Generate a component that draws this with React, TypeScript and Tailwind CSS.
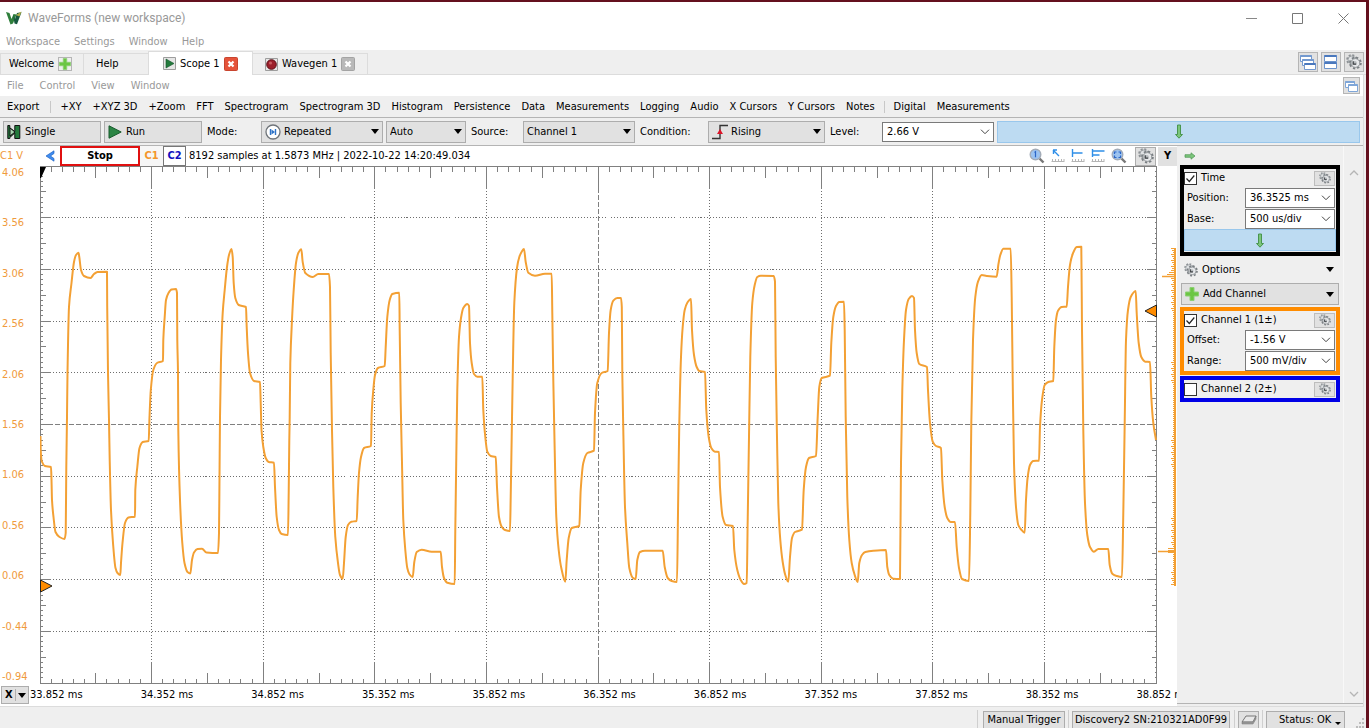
import type { ReactNode } from "react";

const TRACE =
  "40.5,436 40.7,450 41.7,461 45,466 51,467 51.5,480 52,500 53.5,517 55.5,532 59.5,537 64.5,539 65.7,533 66.3,467 67,417 67.5,373 69,307 71.5,283 74,262 76,255 78.5,252.7 79.3,257 81,270 84,276 90.5,278 94,274 97.5,272 107,271.7 107.2,306 108,373 109,420 109.7,460 111,510 113,543 115.5,568 117.5,573 120.3,575 121,563 122.5,543 125,523 128.5,517.5 135,516.7 135.3,490 137.3,467 139.5,448 142.7,442 148.7,441 149.5,417 150.8,390 153.3,370 157,363 163,361 163.3,340 164.7,317 166,300 168.5,293 171.5,289.5 176,289 177,293 177.3,340 178,373 178.3,430 180,500 182.3,543 184.5,563 187.5,572 190.3,573.5 192,560 194,552.5 197.5,549 202,548.7 206.5,552.5 218,553 219,533 219.5,477 220,417 221,360 222.7,313 224.7,290 227,267 229,255 231.5,249 232.7,257 233.7,283 235.3,298 238.7,305 246,307 246.7,327 248,353 250,373 254,381 260,382 260.7,403 261.5,430 263.3,447 265.7,458 268.7,462 274,462.7 275,487 276.7,517 279,530 281.7,534 288,535 288.7,493 289.3,440 289.7,417 290.3,363 292,320 293.7,290 296,263 298.3,253 301.3,249.3 302.7,262 305.3,273 312.7,277 318.3,274 329,274 330,287 330.7,353 332,430 333.3,487 335.3,537 338,563 340,575 342.7,578.7 344,563 345.7,537 348,525 351.3,521.7 356.7,521 357.7,497 359,473 361,457 364,448 371,446 371.7,413 373.3,390 375,375 378,368 384.7,366 385.7,347 387.3,317 389.7,300 392.3,294 399.3,292.7 399.7,330 400.7,403 402,463 403.3,520 405.3,550 407.3,568 409.3,574 412.7,577 414.3,562 416.7,552 421.7,549.7 431.7,551.7 440.7,551.7 442,567 444,578 447.3,582.7 454.7,584 455.3,530 456.3,457 457.3,390 459,337 461,318 463.3,308 467.3,304 469,306 470,343 471.7,363 474,374 477.3,376.7 482.3,376.7 483.3,410 485.3,437 487.3,451.7 490.7,456 495.7,457 497,487 499,517 501.7,526.7 505,530 510,531 510.7,497 511.7,437 512.7,377 514.3,303 517,268 519.3,257 521.7,251.7 524,249 525.7,262 528.3,272.7 535,275.7 545,273.7 551.7,273.7 552.3,313 553.3,380 554.7,450 556.3,517 558.7,550 561.3,568 565.3,581.7 566.7,560 568.7,538 571.7,528 579.3,526 580.7,490 583.3,463 587.3,453 594,450.7 595,413 597.3,383 601.7,373 607.7,371 609,333 610.7,310 613.3,300.7 617.3,298 621,298 621.8,307 622.3,373 623.3,430 625,507 627.3,543 629.3,568 632.7,577.7 635.7,579 637.3,560 640,552 645,550.7 662.7,550.7 664.7,567 667.7,578 671.7,581 677,582 678,513 679.3,423 681,357 682.7,327 684.7,310 687.3,302.7 691,299 692,330 694,355 696.7,367 699.3,371 705,372 706.3,410 708.7,437 711.3,448 715,451.7 719,452 720,487 722.7,517 726,525 733,526 734.3,550 737.3,570 740.7,580 744,584 746.7,583 747.7,520 749,437 750.3,357 752.3,303 754.7,285 757.3,277 760.7,275.7 773.7,276 775,281.7 775.7,357 777,437 778.3,503 780.3,540 782.7,562 785.3,575 788.3,581.7 790,557 792,538 795,532 802,529.7 803.7,490 806,467 809,458 816,456 817.7,417 819.3,387 821.7,378 830,375.7 831.3,343 833.3,317 836,306 839.3,302 844,301.7 844.7,330 845.7,417 847.3,497 849.3,540 851.7,563 854.7,575 857.7,582 859.3,563 862,555 865.3,552 873.3,550.7 886,550 887.3,567 889.3,575 893.3,578.7 900,579 901,463 902.3,390 904,340 906,310 908.7,299 912,296 914,298 915,330 916.7,353 919.3,364 927,367 928,390 930,423 932.7,441.7 936,446 941,448 942.3,480 944.7,507 947.3,518 950.7,522 955,522 956.7,547 959,568 962,579 969,581 970.3,513 971.3,423 973,340 975.3,297 978,281.7 981.7,275 986.7,276 996.7,276.7 998.3,265 1000.3,255 1003.3,248.7 1010.7,248.7 1011.7,297 1012.7,380 1014,463 1016,507 1018.3,525 1020.7,529 1024.7,532.7 1026,500 1027.7,477 1030,465 1033.3,461 1039,460.7 1040,427 1042,400 1044.7,385 1048.3,382 1053.3,381 1054.3,347 1056,320 1058,310.7 1061.7,307 1066.7,306.7 1068,287 1070,265 1072.7,254 1076.7,247 1081.3,246.7 1082,330 1083.3,430 1085,503 1087.3,535 1090,547 1094,551.7 1098.3,549 1108.3,549 1109.7,565 1112.3,573.7 1116.7,576 1122,577 1123.3,513 1124.7,423 1126,340 1128,310 1130.7,297 1135.7,291 1136.7,313 1138.7,343 1141.3,357 1145.3,361.7 1150,362 1151.3,397 1153.3,423 1156,440";

// plot frame in trace coordinates
const LEFT = 40.5;
const TOP = 166.5;
const RIGHT = 1156.5;
const BOTTOM = 683.5;
const snap = (v: number) => Math.floor(v - 0.5) + 0.5;
const gridX = (i: number, n: number) => snap(LEFT + ((RIGHT - LEFT) * i) / n);
const gridY = (i: number, n: number) => snap(TOP + ((BOTTOM - TOP) * i) / n);

// monotone cubic through the samples, so plateaus don't overshoot
function tracePath() {
  const p = TRACE.split(" ").map((s) => s.split(",").map(Number));
  const slope = (i: number) => (p[i + 1][1] - p[i][1]) / (p[i + 1][0] - p[i][0]);
  const tangent = (i: number) => {
    if (i === 0) return slope(0);
    if (i === p.length - 1) return slope(i - 1);
    const a = slope(i - 1);
    const b = slope(i);
    return a * b <= 0 ? 0 : (2 * a * b) / (a + b);
  };
  let d = `M${p[0][0]} ${p[0][1]}`;
  for (let i = 0; i < p.length - 1; i++) {
    const [x0, y0] = p[i];
    const [x1, y1] = p[i + 1];
    const dx = (x1 - x0) / 3;
    d += `C${x0 + dx} ${y0 + dx * tangent(i)} ${x1 - dx} ${y1 - dx * tangent(i + 1)} ${x1} ${y1}`;
  }
  return d;
}

function ticks() {
  let d = "";
  for (let i = 1; i < 100; i++) {
    const x = gridX(i, 100);
    const len = i % 10 === 0 ? 22 : i % 5 === 0 ? 11 : 5;
    d += `M${x} ${TOP}v${len}M${x} ${BOTTOM}v${-len}`;
    const y = gridY(i, 100);
    const w = i % 10 === 0 ? 10 : i % 5 === 0 ? 5 : 2;
    d += `M${LEFT} ${y}h${w}M${RIGHT} ${y}h${-w}`;
  }
  return d;
}

function histogram() {
  let d = "";
  for (let y = 248; y < 586; y += 2) {
    const busy = y < 312 || (y > 360 && y < 385) || (y > 435 && y < 470) || (y > 515 && y < 545) || y > 570;
    const w = y > 268 && y < 278 ? y - 265 : y > 547 && y < 554 ? 8 : busy ? 3 + ((y * 7) % 3) : 3;
    d += `M19 ${y + 0.5}h${-w}`;
  }
  return d;
}

const toolsA = ["+XY", "+XYZ 3D", "+Zoom", "FFT", "Spectrogram", "Spectrogram 3D", "Histogram", "Persistence", "Data", "Measurements", "Logging", "Audio", "X Cursors", "Y Cursors", "Notes"];
const yLabels = ["4.06", "3.56", "3.06", "2.56", "2.06", "1.56", "1.06", "0.56", "0.06", "-0.44", "-0.94"];
const xLabels = ["33.852 ms", "34.352 ms", "34.852 ms", "35.352 ms", "35.852 ms", "36.352 ms", "36.852 ms", "37.352 ms", "37.852 ms", "38.352 ms", "38.852 ms"];

function Gear({ className = "size-4" }: { className?: string }) {
  return (
    <svg viewBox="0 0 16 16" className={className} fill="none" aria-hidden="true">
      <circle cx="5.8" cy="5.8" r="4.6" stroke="#8d9296" strokeWidth="2" strokeDasharray="2 1.6" />
      <circle cx="5.8" cy="5.8" r="3.8" fill="#dfe2e4" stroke="#8d9296" strokeWidth="0.8" />
      <circle cx="9.4" cy="9" r="5.4" stroke="#7a7f83" strokeWidth="2" strokeDasharray="2.2 2.04" />
      <circle cx="9.4" cy="9" r="4.4" fill="#e6e8ea" stroke="#868b8f" strokeWidth="0.9" />
      <circle cx="8.8" cy="9" r="2" fill="#b4b8bb" />
      <path d="M7.2 7.2v3h3" stroke="#3f4347" strokeWidth="1.300" />
    </svg>
  );
}

function GreenArrow({ className = "h-[15px] w-2" }: { className?: string }) {
  return (
    <svg viewBox="0 0 8 15" className={className} aria-hidden="true">
      <path d="M2.500 1h3v9.500h2L4 14.200.5 10.500h2z" fill="#7cc67c" stroke="#3f8f43" strokeWidth="0.900" />
    </svg>
  );
}

function Plus() {
  return (
    <svg viewBox="0 0 14 14" className="size-3.5" aria-hidden="true">
      <path d="M5 .5h4V5h4.500v4H9v4.500H5V9H.5V5H5z" fill="#6cc644" stroke="#8ccf74" />
    </svg>
  );
}

function Caret() {
  return (
    <svg viewBox="0 0 8 5" className="pointer-events-none h-[5px] w-2" aria-hidden="true">
      <path d="M0 0h8L4 5z" fill="#000" />
    </svg>
  );
}

function Chevron() {
  return (
    <svg viewBox="0 0 10 6" className="pointer-events-none h-1.5 w-2.5" fill="none" aria-hidden="true">
      <path d="M1 .7l4 4 4-4" stroke="#444" />
    </svg>
  );
}

function Drop({ label, value, className, icon, light = false }: { label: string; value: string; className: string; icon?: ReactNode; light?: boolean }) {
  return (
    <span className={`relative flex shrink-0 items-center ${className}`}>
      {icon && <span className="pointer-events-none absolute left-1">{icon}</span>}
      <select
        aria-label={label}
        className={`h-full w-full appearance-none border ${light ? "border-[#7a7a7a] bg-white pl-1" : "border-[#adadad] bg-[#e1e1e1] pl-[3px]"} ${icon ? "pl-[22px]" : ""}`}
      >
        <option>{value}</option>
      </select>
      <span className="pointer-events-none absolute right-1">{light ? <Chevron /> : <Caret />}</span>
    </span>
  );
}

function BlueBar({ className }: { className: string }) {
  return (
    <button aria-label="Expand" className={`flex items-center justify-center border border-[#99c7ec] bg-[#bddbf2] ${className}`}>
      <GreenArrow />
    </button>
  );
}

function GearButton() {
  return (
    <button aria-label="Settings" className="flex h-[15px] w-[21px] items-center justify-center border border-[#bdbdbd] bg-[#e1e1e1]">
      <Gear className="size-3" />
    </button>
  );
}

function ChannelHead({ name, checked }: { name: string; checked: boolean }) {
  return (
    <div className="flex h-[18px] items-center justify-between pr-px">
      <label className="flex items-center gap-1">
        <span className="relative flex">
          <input type="checkbox" defaultChecked={checked} className="peer size-[13px] appearance-none border border-[#333] bg-white" />
          <svg viewBox="0 0 13 13" className="pointer-events-none absolute inset-0 hidden peer-checked:block" fill="none">
            <path d="M2.500 6.500l2.800 3 5-6" stroke="#222" strokeWidth="1.200" />
          </svg>
        </span>
        {name}
      </label>
      <GearButton />
    </div>
  );
}

function Field({ label, value }: { label: string; value: string }) {
  return (
    <div className="flex h-[21px] items-center justify-between pr-px pl-[3px]">
      <span>{label}</span>
      <Drop label={label} value={value} light className="h-5 w-[90px]" />
    </div>
  );
}

function CloseBox({ active = false }: { active?: boolean }) {
  return (
    <svg viewBox="0 0 14 14" className="size-3.5" role="img" aria-label="Close tab">
      <rect x=".5" y=".5" width="13" height="13" rx="1" fill={active ? "#e5533a" : "#b9b9b9"} stroke={active ? "#c8452f" : "#a3a3a3"} />
      <path d="M4.500 4.500l5 5M9.500 4.500l-5 5" stroke="#fff" strokeWidth="2.200" />
    </svg>
  );
}

function Cascade() {
  return (
    <svg viewBox="0 0 16 16" className="size-4" fill="#fff" stroke="#7399cf" aria-hidden="true">
      <path d="M.5 1.500h11v6H.5z" />
      <path d="M.5 2h11" strokeWidth="2" />
      <path d="M2.500 5.500h11v6h-11z" />
      <path d="M2.500 6h11" strokeWidth="2" />
      <path d="M4.500 9.500h11v6h-11z" />
      <path d="M4.500 10h11" stroke="#4a78bd" strokeWidth="2" />
    </svg>
  );
}

function Magnifier({ mark }: { mark: ReactNode }) {
  return (
    <svg viewBox="0 0 16 16" className="size-4" fill="none" aria-hidden="true">
      <path d="M10.500 10.500l4 4" stroke="#777" strokeWidth="2.400" />
      <circle cx="6.500" cy="6.500" r="5.300" fill="#9cc3f0" stroke="#a3acb8" strokeWidth="1.400" />
      <g stroke="#2a66c8" strokeWidth="1.200">{mark}</g>
    </svg>
  );
}

function Ruler({ d }: { d: string }) {
  return (
    <svg viewBox="0 0 14 14" className="h-3.5 w-3.5" fill="none" aria-hidden="true">
      <path d={d} stroke="#2f8fe8" strokeWidth="1.400" />
      <path d="M.5 12.500h13M1.500 10v2M4.500 10v2M7.500 10v2M10.500 10v2M13 10v2" stroke="#b5b5b5" />
    </svg>
  );
}

export default function App() {
  return (
    <div className="flex h-screen min-h-[480px] flex-col overflow-hidden border-t-2 border-r-[3px] border-[#64101e] bg-[#efefef] font-['DejaVu_Sans_Condensed',Tahoma,'DejaVu_Sans',sans-serif] text-[11px] leading-[14px] text-black">
      <header className="shrink-0 bg-white text-[#999]">
        <div className="flex h-8 items-center justify-between pl-1.5">
          <div className="flex items-center gap-1.5 font-['Roboto',sans-serif] text-[12px]">
            <svg viewBox="0 0 16 14" className="h-3.5 w-4" aria-hidden="true">
              <path d="M0 1l3.500 1 2 6L7.500 3l3 .5-3.500 9-2.500 1z" fill="#2f7f3c" />
              <path d="M7 3.500l2 4.500 2-6 4.500-.8-4.500 12-2.500-.8z" fill="#17583f" />
              <path d="M10 4l5.500-3.500-2 5z" fill="#b3b04c" />
            </svg>
            <span>WaveForms (new workspace)</span>
          </div>
          <div className="flex items-center">
            <button aria-label="Minimize" className="flex w-[46px] justify-center">
              <svg viewBox="0 0 11 11" className="size-[11px]"><path d="M0 5.500h11" stroke="#888" /></svg>
            </button>
            <button aria-label="Maximize" className="flex w-[46px] justify-center">
              <svg viewBox="0 0 11 11" className="size-[11px]"><path d="M.5.5h10v10H.5z" stroke="#777" fill="none" /></svg>
            </button>
            <button aria-label="Close" className="flex w-[46px] justify-center">
              <svg viewBox="0 0 11 11" className="size-[11px]"><path d="M.5.5l10 10M10.500.5l-10 10" stroke="#777" /></svg>
            </button>
          </div>
        </div>
        <nav className="flex h-4 items-center gap-3.5 pl-1.5">
          {["Workspace", "Settings", "Window", "Help"].map((m) => (
            <button key={m}>{m}</button>
          ))}
        </nav>
      </header>

      {/* Document tabs */}
      <div className="flex h-[25px] shrink-0 items-end justify-between border-b border-[#dcdcdc] pr-0.5">
        <div className="flex items-end">
          <button className="flex h-[21px] w-[84px] items-center gap-1 border border-b-0 border-[#dcdcdc] pl-2">
            Welcome
            <span className="flex size-3.5 items-center justify-center border border-[#b5b5b5]"><Plus /></span>
          </button>
          <button className="h-[21px] w-16 border-t border-[#dcdcdc] pl-3 text-left">Help</button>
          <button className="-mb-px flex h-6 w-[105px] items-center gap-1 border border-b-0 border-[#dcdcdc] bg-white pl-3.5">
            <svg viewBox="0 0 13 13" className="size-[13px]">
              <path d="M.5.5h12v12H.5z" fill="#e6e6e6" stroke="#9d9d9d" />
              <path d="M3 2l8 4.500L3 11z" fill="#237a3c" stroke="#14522a" strokeWidth="0.600" />
            </svg>
            Scope 1
            <CloseBox active />
          </button>
          <button className="flex h-[21px] w-[115px] items-center gap-1 border border-b-0 border-l-0 border-[#dcdcdc] pl-3">
            <svg viewBox="0 0 13 13" className="size-[13px]">
              <path d="M.5.5h12v12H.5z" fill="#e6e6e6" stroke="#9d9d9d" />
              <circle cx="6.500" cy="6.500" r="4.800" fill="#9c1f2a" stroke="#5c0f17" />
              <circle cx="5.500" cy="5" r="1.600" fill="#c65a60" />
            </svg>
            Wavegen 1
            <CloseBox />
          </button>
        </div>
        <div className="flex gap-[3px] pb-0.5">
          <button aria-label="Cascade" className="flex size-5 items-center justify-center border border-[#b5b5b5] bg-[#e1e1e1]"><Cascade /></button>
          <button aria-label="Tile" className="flex size-5 items-center justify-center border border-[#b5b5b5] bg-[#e1e1e1]">
            <svg viewBox="0 0 14 14" className="size-3.5" fill="#fff" stroke="#6b93cc"><path d="M.5.5h12v6H.5zM.5 7.500h12v6H.5z" /><path d="M.5 1h12M.5 8h12" stroke="#4a78bd" strokeWidth="2" /></svg>
          </button>
          <button aria-label="Options" className="flex size-5 items-center justify-center border border-[#b5b5b5] bg-[#e1e1e1]"><Gear /></button>
        </div>
      </div>

      <div className="mr-0.5 flex min-h-0 flex-1 flex-col border-r border-b border-[#dcdcdc]">
        <nav className="flex h-[21px] shrink-0 items-center justify-between bg-white pr-[3px] pl-[7px] text-[#999]">
          <div className="flex gap-4">
            {["File", "Control", "View", "Window"].map((m) => (
              <button key={m}>{m}</button>
            ))}
          </div>
          <button aria-label="Undock" className="flex size-[17px] items-center justify-center border border-[#b5b5b5] bg-[#e1e1e1]">
            <svg viewBox="0 0 13 12" className="h-3 w-[13px]" fill="#fff" stroke="#7fa6d8">
              <path d="M.5 1.500h9v6h-9z" />
              <path d="M.5 2h9" strokeWidth="2" />
              <path d="M3.500 4.500h9v7h-9z" />
              <path d="M3.500 5h9" strokeWidth="2" />
            </svg>
          </button>
        </nav>

        <div className="flex h-[22px] shrink-0 items-center gap-[11px] border-b border-[#b4b4b4] pl-[7px] whitespace-nowrap">
          <button>Export</button>
          <span className="-mr-0.5 h-3 w-px bg-[#c8c8c8]" />
          {toolsA.map((t) => (
            <button key={t}>{t}</button>
          ))}
          <span className="-mx-0.5 h-3 w-px bg-[#c8c8c8]" />
          <button>Digital</button>
          <button>Measurements</button>
        </div>

        {/* Acquisition controls */}
        <div className="flex h-7 shrink-0 items-center gap-[3px] border-b border-[#b4b4b4] pr-[3px] pl-[3px] whitespace-nowrap">
          <button className="flex h-[22px] w-[98px] shrink-0 items-center gap-1 border border-[#adadad] bg-[#e1e1e1] pl-[3px]">
            <svg viewBox="0 0 14 16" className="h-4 w-3.5"><path d="M.8 1.500h2v2.500l5 3.500V1.500h5v13h-5V9l-5 4.500v1h-2z" fill="#237a3c" stroke="#111" /><path d="M3 4v8l5-4z" fill="#a6d3af" stroke="#111" /></svg>
            Single
          </button>
          <button className="flex h-[22px] w-[98px] shrink-0 items-center gap-1 border border-[#adadad] bg-[#e1e1e1] pl-[3px]">
            <svg viewBox="0 0 14 14" className="size-3.5"><path d="M1 .8L13.200 7 1 13.200z" fill="#2b8545" stroke="#185b2c" /></svg>
            Run
          </button>
          <span className="w-[53px] shrink-0 pl-0.5">Mode:</span>
          <Drop
            label="Mode"
            value="Repeated"
            className="h-[22px] w-[122px]"
            icon={
              <svg viewBox="0 0 16 16" className="size-4" fill="none"><circle cx="8" cy="8" r="7" fill="#fff" stroke="#6f7479" strokeWidth="1.300" /><path d="M5.500 5v6M10.500 5v6" stroke="#2f74c8" strokeWidth="1.400" /><path d="M6.500 5.500L10 8l-3.500 2.500z" fill="#2f74c8" /></svg>
            }
          />
          <Drop label="Trigger mode" value="Auto" className="h-[22px] w-20" />
          <span className="w-[51px] shrink-0 pl-0.5">Source:</span>
          <Drop label="Source" value="Channel 1" className="h-[22px] w-28" />
          <span className="w-[67px] shrink-0 pl-0.5">Condition:</span>
          <Drop
            label="Condition"
            value="Rising"
            className="h-[22px] w-[117px]"
            icon={
              <svg viewBox="0 0 16 16" className="size-4" fill="none"><path d="M0 14.500h8v-13h8" stroke="#333" strokeWidth="1.400" /><path d="M8 5l3 5H5z" fill="#dc1428" /></svg>
            }
          />
          <span className="w-[51px] shrink-0 pl-0.5">Level:</span>
          <Drop label="Level" value="2.66 V" light className="h-5 w-28" />
          <BlueBar className="h-[22px] min-w-0 flex-1" />
        </div>

        <div className="flex min-h-0 flex-1">
          <main className="flex min-w-0 flex-1 flex-col bg-white">
            <div className="flex h-5 shrink-0 items-center justify-between">
              <div className="flex items-center whitespace-nowrap">
                <span className="w-[45px] text-[#f09a3c]">C1 V</span>
                <button aria-label="Collapse" className="w-[15px]">
                  <svg viewBox="0 0 10 12" className="h-3 w-2.5"><path d="M9 .8L1 6l8 5.200V8.500L5.500 6 9 3.500z" fill="#3f8cf0" stroke="#2166c4" strokeWidth="0.700" /></svg>
                </button>
                <span className="flex h-5 w-20 items-center justify-center border-2 border-[#e01010] font-bold">Stop</span>
                <button className="h-5 w-[23px] bg-[#f6f6f6] font-bold text-[#f4962c]">C1</button>
                <button className="h-5 w-[23px] border border-[#777] font-bold text-[#1010c0]">C2</button>
                <span className="pl-[3px]">8192 samples at 1.5873 MHz | 2022-10-22 14:20:49.034</span>
              </div>
              <div className="flex items-center gap-1.5">
                <button aria-label="Zoom 1"><Magnifier mark={<path d="M5.500 4.500l1-.8v5.500" />} /></button>
                <button aria-label="Pointer"><Ruler d="M2 1h4M2.500 1v4M2 1l6 6" /></button>
                <button aria-label="Cursor"><Ruler d="M1.500 0v8M1.500 4h10" /></button>
                <button aria-label="Cursors"><Ruler d="M1.500 0v8M1.500 2h12M1.500 6h7" /></button>
                <button aria-label="Zoom fit"><Magnifier mark={<path d="M3.500 6V4h2M7.500 4h2v2M9.500 7.500v2h-2M5.500 9.500h-2v-2" />} /></button>
                <div className="flex gap-0.5 pl-0.5">
                  <button aria-label="Plot options" className="flex h-[19px] w-[21px] items-center justify-center border border-[#adadad] bg-[#e1e1e1]"><Gear /></button>
                  <button className="h-[19px] w-[19px] bg-[#e1e1e1] font-bold">Y</button>
                </div>
              </div>
            </div>

            <div className="flex min-h-0 flex-1">
              <div className="flex w-10 shrink-0 flex-col justify-between pl-0.5 text-[#f09a3c]">
                {yLabels.map((l) => (
                  <span key={l}>{l}</span>
                ))}
              </div>
              <svg viewBox="40 166 1117 518" preserveAspectRatio="none" className="h-full min-w-0 flex-1" fill="none" role="img" aria-label="Channel 1 waveform">
                <g stroke="#6e6e6e" strokeDasharray="1 2" shapeRendering="crispEdges">
                  {[1, 2, 3, 4, 6, 7, 8, 9].map((i) => (
                    <path key={i} d={`M${gridX(i, 10)} ${TOP}V${BOTTOM}M${LEFT} ${gridY(i, 10)}H${RIGHT}`} />
                  ))}
                </g>
                <path d={`M${gridX(5, 10)} ${TOP}V${BOTTOM}M${LEFT} ${gridY(5, 10)}H${RIGHT}`} stroke="#808080" strokeDasharray="5 2" shapeRendering="crispEdges" />
                <path d={ticks()} stroke="#808080" shapeRendering="crispEdges" />
                <path d={`M${LEFT} ${TOP}H${RIGHT}V${BOTTOM}H${LEFT}z`} stroke="#808080" shapeRendering="crispEdges" />
                <path d={tracePath()} stroke="#f3a034" strokeWidth="2" strokeLinejoin="round" />
                <path d="M40 167h6l-5 11h-1z" fill="#000" />
                <path d="M40.500 580l11.500 6-11.500 6z" fill="#ff8c00" stroke="#222" />
                <path d="M1156.500 305l-11.500 6 11.500 6z" fill="#ff8c00" stroke="#222" />
              </svg>
              <svg viewBox="0 166 20 518" preserveAspectRatio="none" className="h-full w-5 shrink-0" fill="none" aria-hidden="true">
                <path d="M18 248v338" stroke="#f3a034" strokeWidth="2" />
                <path d={histogram()} stroke="#f3a034" />
                <path d="M19 276.500H5M19 551.500H1" stroke="#f3a034" strokeWidth="1.500" />
              </svg>
            </div>

            <div className="flex h-[22px] shrink-0 items-center">
              <button className="mx-px flex h-[18px] w-7 shrink-0 items-center justify-between border border-[#adadad] bg-[#e1e1e1] pr-0.5 pl-[3px] font-bold">
                X
                <span className="h-3 w-px bg-[#b0b0b0]" />
                <Caret />
              </button>
              <div className="min-w-0 flex-1 overflow-hidden">
                <div className="-mr-3 flex justify-between whitespace-nowrap">
                  {xLabels.map((l) => (
                    <span key={l}>{l}</span>
                  ))}
                </div>
              </div>
            </div>
          </main>

          <aside className="mb-0.5 flex w-[186px] shrink-0 border-b border-[#b4b4b4]">
            <div className="flex flex-1 flex-col pl-[3px]">
              <div className="flex h-[19px] items-center pl-1">
                <svg viewBox="0 0 12 8" className="h-2 w-3"><path d="M1 2.700h6V.8L11 4 7 7.200V5.300H1z" fill="#7cc67c" stroke="#4c9450" strokeWidth="0.700" /></svg>
              </div>
              <section className="border-4 border-black pb-px">
                <ChannelHead name="Time" checked />
                <Field label="Position:" value="36.3525 ms" />
                <Field label="Base:" value="500 us/div" />
                <BlueBar className="h-[22px] w-full" />
              </section>
              <button className="mt-px flex h-[25px] items-center gap-1 pr-1.5 pl-1">
                <Gear className="size-3.5" />
                <span className="flex-1 text-left">Options</span>
                <Caret />
              </button>
              <button className="mx-px mt-px flex h-[22px] items-center gap-1 border border-[#adadad] bg-[#e1e1e1] pr-1 pl-[3px]">
                <Plus />
                <span className="flex-1 text-left">Add Channel</span>
                <Caret />
              </button>
              <section className="mt-0.5 border-4 border-[#ff8c00]">
                <ChannelHead name="Channel 1 (1±)" checked />
                <Field label="Offset:" value="-1.56 V" />
                <Field label="Range:" value="500 mV/div" />
              </section>
              <section className="mt-px border-4 border-[#0000e6]">
                <ChannelHead name="Channel 2 (2±)" checked={false} />
              </section>
            </div>
            <div className="ml-[3px] flex w-5 flex-col items-center justify-between border-l border-[#f8f8f8] pt-6 pb-1.5">
              <svg viewBox="0 0 10 6" className="h-1.5 w-2.5" fill="none"><path d="M1 5l4-4 4 4" stroke="#b5b5b5" strokeWidth="1.300" /></svg>
              <svg viewBox="0 0 10 6" className="h-1.5 w-2.5" fill="none"><path d="M1 1l4 4 4-4" stroke="#b5b5b5" strokeWidth="1.300" /></svg>
            </div>
          </aside>
        </div>
      </div>

      {/* Status bar, runs off the bottom edge of the window */}
      <footer className="flex h-[21px] shrink-0 items-end justify-end gap-[3px] overflow-hidden whitespace-nowrap">
        <span className="h-[18px] w-px bg-[#cfcfcf]" />
        <button className="ml-0.5 h-[17px] w-[82px] border border-b-0 border-[#adadad] bg-[#e1e1e1]">Manual Trigger</button>
        <span className="h-[18px] w-px bg-[#cfcfcf]" />
        <button className="h-[17px] w-[158px] border border-b-0 border-[#adadad] bg-[#e1e1e1]">Discovery2 SN:210321AD0F99</button>
        <span className="ml-px h-[18px] w-px bg-[#cfcfcf]" />
        <button aria-label="Clear" className="flex h-[17px] w-[21px] items-center justify-center border border-b-0 border-[#adadad] bg-[#e1e1e1]">
          <svg viewBox="0 0 16 10" className="h-2.5 w-4"><path d="M5 1h10l-3 6H1z" fill="#e8e8e8" stroke="#777" /><path d="M1 7v2h11l3-5V1l-3 6z" fill="#9a9a9a" stroke="#777" strokeWidth="0.500" /></svg>
        </button>
        <span className="h-[18px] w-px bg-[#cfcfcf]" />
        <button className="flex h-[17px] w-[79px] items-center justify-between border border-b-0 border-[#adadad] bg-[#e1e1e1] pr-[3px] pl-3">
          Status: OK
          <svg viewBox="0 0 6 3" className="mt-1.5 h-[3px] w-1.5"><path d="M0 0h6L3 3z" /></svg>
        </button>
        <svg viewBox="0 0 18 18" className="h-[18px] w-[18px]" fill="#bdbdbd"><path d="M14 8h2v2h-2zM11 12h2v2h-2zM14 12h2v2h-2zM8 16h2v2H8zM11 16h2v2h-2zM14 16h2v2h-2z" /></svg>
      </footer>
    </div>
  );
}
